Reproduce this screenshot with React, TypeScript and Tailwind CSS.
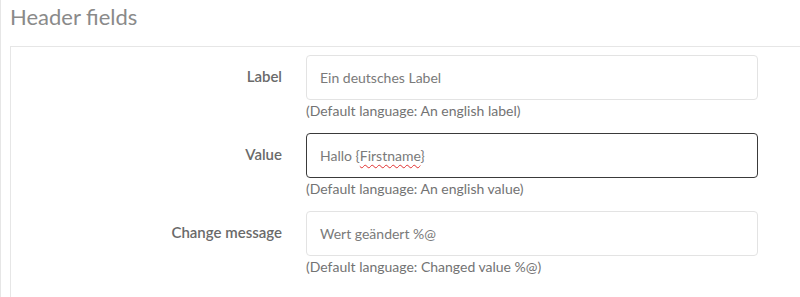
import React from "react";

const rows = [
  { label: "Label", value: "Ein deutsches Label", help: "(Default language: An english label)", focused: false },
  { label: "Value", value: "Hallo {Firstname}", help: "(Default language: An english value)", focused: true },
  { label: "Change message", value: "Wert geändert %@", help: "(Default language: Changed value %@)", focused: false },
];

export default function App() {
  return (
    <div
      className="w-[800px] h-[297px] overflow-hidden bg-white border-l border-[#e6e6e6]"
      style={{ fontFamily: "Lato, 'Open Sans', sans-serif" }}
    >
      <h2 className="pl-[9px] pt-[3px] h-[46px] text-[22px] leading-[28px] text-[#8a8a8a] font-normal">
        Header fields
      </h2>
      <div className="ml-[9px] border-t border-l border-[#e6e6e6] pt-[8px] h-[260px]">
        {rows.map((r) => (
          <div key={r.label} className="flex h-[78px]">
            <div className="w-[271px] text-right text-[15px] font-semibold text-[#6a6a6a] pt-[11px] leading-[20px]">
              {r.label}
            </div>
            <div className="ml-[24px] w-[452px]">
              <div
                className={
                  "h-[45px] rounded-[4px] border flex items-center pl-[13px] text-[14px] text-[#7a7a7a] " +
                  (r.focused ? "border-[#3a3a3a]" : "border-[#e3e3e3]")
                }
              >
                {r.focused ? (
                  <span>
                    Hallo {"{"}
                    <span className="underline decoration-wavy decoration-[#e03030] decoration-1 underline-offset-[3px]">
                      Firstname
                    </span>
                    {"}"}
                  </span>
                ) : (
                  r.value
                )}
              </div>
              <div className="mt-[1px] text-[14px] leading-[20px] text-[#737373]">{r.help}</div>
            </div>
          </div>
        ))}
      </div>
    </div>
  );
}
